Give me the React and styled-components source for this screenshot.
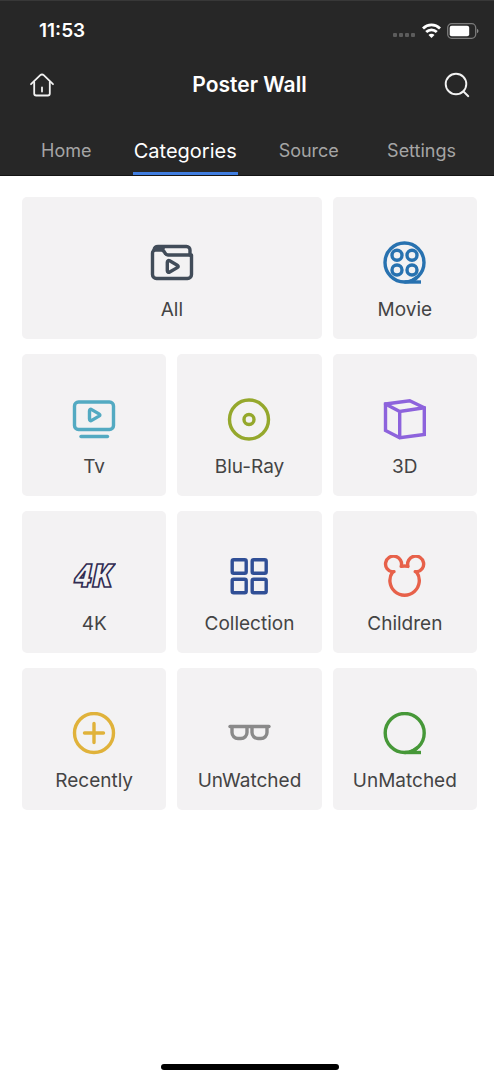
import React from "react";
import styled, { createGlobalStyle } from "styled-components";

const GlobalStyle = createGlobalStyle`
  * { box-sizing: border-box; }
  body {
    margin: 0;
    background: #ffffff;
    font-family: Inter, "Liberation Sans", sans-serif;
  }
  button { font: inherit; border: 0; padding: 0; cursor: pointer; }
`;

const Page = styled.div`
  display: flex;
  flex-direction: column;
  min-height: 100vh;
`;

const Header = styled.header`
  background: #272727;
  border-top: 1px solid #383838;
  border-bottom: 1px solid #141414;
`;

const StatusBar = styled.div`
  display: flex;
  align-items: center;
  justify-content: space-between;
  height: 59px;
  padding: 0 15px 0 39px;
`;

const Clock = styled.time`
  color: #ffffff;
  font-size: 19px;
  line-height: 24px;
  font-weight: 600;
`;

const StatusIcons = styled.div`
  display: flex;
  align-items: center;
  gap: 6px;
`;

const TitleBar = styled.div`
  display: grid;
  grid-template-columns: 1fr auto 1fr;
  align-items: center;
  height: 50px;
  padding: 0 24px 0 29px;
`;

const Title = styled.h1`
  margin: 0;
  color: #ffffff;
  font-size: 21px;
  line-height: 26px;
  font-weight: 600;
`;

const IconButton = styled.button`
  display: flex;
  justify-self: ${(p) => p.$side};
  background: none;
  color: #f2f2f2;
`;

const Tabs = styled.nav`
  display: grid;
  grid-template-columns: repeat(4, 1fr);
  justify-items: center;
  padding-top: 25px;
`;

const Tab = styled.button`
  height: 40px;
  padding: 0 1px 5px;
  background: none;
  border-bottom: 3px solid ${(p) => (p.$active ? "#3f7de0" : "transparent")};
  color: ${(p) => (p.$active ? "#ffffff" : "#a5a5a5")};
  font-size: ${(p) => (p.$active ? 20 : 18)}px;
  line-height: 24px;
  white-space: nowrap;

  &:first-child { justify-self: start; margin-left: 40px; }
  &:last-child { justify-self: end; margin-right: 37px; }
`;

const Grid = styled.main`
  display: grid;
  grid-template-columns: repeat(3, 1fr);
  gap: 15px 11px;
  padding: 21px 17px 24px 22px;
`;

const Tile = styled.button`
  grid-column: span ${(p) => (p.$wide ? 2 : 1)};
  display: flex;
  flex-direction: column;
  align-items: center;
  justify-content: flex-end;
  gap: 13px;
  height: 142px;
  && { padding-bottom: 17px; }
  border-radius: 5px;
  background: #f3f2f3;
  color: #444444;
`;

const TileLabel = styled.span`
  font-size: 19px;
  line-height: 24px;
`;

const Glyph = styled.svg`
  display: block;
  width: 44px;
  height: 44px;
  fill: none;
  stroke: ${(p) => p.$color};
  stroke-linecap: round;
  stroke-linejoin: round;
`;

const FourK = styled.text`
  font: italic 800 31px "Open Sans", "Liberation Sans", sans-serif;
  stroke-linejoin: miter;
`;

const HomeIndicator = styled.div`
  width: 178px;
  height: 6px;
  margin: auto auto 10px;
  border-radius: 3px;
  background: #000000;
`;

const Footer = styled.footer`
  display: flex;
  margin-top: auto;
  padding-left: 5px;
`;

const categories = [
  {
    label: "All",
    wide: true,
    color: "#414c59",
    art: (
      <>
        <path d="M2.500 12v21.500a4 4 0 0 0 4 4h31a4 4 0 0 0 4-4V14H18c-4 0-2.600-5-6.500-5H5.500a3 3 0 0 0-3 3z" />
        <path d="M4 9c.4-2.500 1.600-3.500 4-3.500h28.500a3.500 3.500 0 0 1 3.500 3.500v5" />
        <path d="M6 7.200h7" />
        <path d="M17.300 21.200c0-1.500 1.200-2.100 2.400-1.400l7.600 4.400c1.200.7 1.200 1.700 0 2.400l-7.600 4.400c-1.200.7-2.400.1-2.400-1.300z" />
      </>
    ),
  },
  {
    label: "Movie",
    color: "#2872b0",
    art: (
      <>
        <circle cx="21.500" cy="21.500" r="19.500" />
        <path d="M21.500 41H38" strokeLinecap="butt" />
        <path d="M28 40.200c2-.7 4-2 5.500-3.500" />
        <circle cx="14" cy="14.300" r="5" />
        <circle cx="29" cy="14.300" r="5" />
        <circle cx="14" cy="29" r="5" />
        <circle cx="29" cy="29" r="5" />
      </>
    ),
  },
  {
    label: "Tv",
    color: "#53aac2",
    art: (
      <>
        <rect x="2.500" y="4" width="39" height="27.500" rx="4" />
        <path d="M9 38.500h26.500" />
        <path d="M17.500 13c0-1.500 1-2.100 2.200-1.400l7.300 4.300c1.200.7 1.200 1.500 0 2.200l-7.300 4.300c-1.200.7-2.200.1-2.200-1.400z" />
      </>
    ),
  },
  {
    label: "Blu-Ray",
    color: "#95a82c",
    art: (
      <>
        <circle cx="22" cy="21.500" r="19.500" />
        <circle cx="22" cy="21.500" r="5" />
      </>
    ),
  },
  {
    label: "3D",
    color: "#8d63dc",
    art: (
      <g strokeLinejoin="miter">
        <path d="M2.500 6L26.700 2.800 41.300 9.800V36.500L16.700 39.700 2.500 32.500z" />
        <path d="M2.500 6l14.200 7.500L41.300 9.800M16.700 13.500v26" />
      </g>
    ),
  },
  {
    label: "4K",
    color: "#302c52",
    art: (
      <FourK x="21.500" y="32" textAnchor="middle" strokeWidth="1.600">
        4K
      </FourK>
    ),
  },
  {
    label: "Collection",
    color: "#304f96",
    art: (
      <>
        <rect x="5.200" y="4.800" width="14" height="13.500" rx="1.500" />
        <rect x="25.200" y="4.800" width="14" height="13.500" rx="1.500" />
        <rect x="5.200" y="24.200" width="14" height="13.500" rx="1.500" />
        <rect x="25.200" y="24.200" width="14" height="13.500" rx="1.500" />
      </>
    ),
  },
  {
    label: "Children",
    color: "#e7614a",
    art: (
      <>
        <path d="M18.200 11.400A14.700 14.700 0 0 1 25 11.400 8 8 0 1 1 33.600 17 14.700 14.700 0 1 1 9.600 17 8 8 0 1 1 18.200 11.400z" />
        <path d="M9.600 17l1.400-.3M33.600 17l-1.400-.3" />
      </>
    ),
  },
  {
    label: "Recently",
    color: "#e0b23a",
    art: (
      <>
        <circle cx="22" cy="21" r="19.500" />
        <path d="M12.500 21h19M22 11.500v19" />
      </>
    ),
  },
  {
    label: "UnWatched",
    color: "#8a8a8a",
    art: (
      <>
        <path d="M3 14.500h39" />
        <path d="M5 15v5.500a6 6 0 0 0 6 6h3a6 6 0 0 0 6-6V15M25 15v5.500a6 6 0 0 0 6 6h3a6 6 0 0 0 6-6V15" />
      </>
    ),
  },
  {
    label: "UnMatched",
    color: "#469838",
    art: (
      <>
        <circle cx="21.700" cy="21" r="19.500" />
        <path d="M21.700 40.500H38" strokeLinecap="butt" />
        <path d="M28 39.700c2-.7 4-2 5.500-3.500" />
      </>
    ),
  },
];

function StatusGlyphs() {
  return (
    <StatusIcons>
      <svg width="23" height="18" viewBox="0 0 23 18" fill="#5c5c5c" aria-hidden="true">
        <rect x="0" y="11" width="4" height="4" rx="1" />
        <rect x="6" y="11" width="4" height="4" rx="1" />
        <rect x="12" y="11" width="4" height="4" rx="1" />
        <rect x="18" y="11" width="4" height="4" rx="1" />
      </svg>
      <svg width="19" height="18" viewBox="0 0 19 18" fill="none" stroke="#ffffff" strokeWidth="2.800" aria-label="Wi-Fi">
        <path d="M1 6.400a12.200 12.200 0 0 1 17 0" />
        <path d="M4.200 10.100a7.600 7.600 0 0 1 10.600 0" />
        <path d="M9.500 16L6.500 12.900a4.200 4.200 0 0 1 6 0z" fill="#ffffff" stroke="none" />
      </svg>
      <svg width="32" height="18" viewBox="0 0 32 18" aria-label="Battery">
        <rect x="0.700" y="1.700" width="28" height="14.600" rx="4" fill="none" stroke="#7c7c7c" strokeWidth="1.300" />
        <rect x="2.700" y="3.700" width="19.500" height="10.600" rx="2" fill="#ffffff" />
        <path d="M30 6.800c2 .8 2 3.600 0 4.400z" fill="#8a8a8a" />
      </svg>
    </StatusIcons>
  );
}

export default function App() {
  const [active, setActive] = React.useState("Categories");
  return (
    <Page>
      <GlobalStyle />
      <Header>
        <StatusBar>
          <Clock>11:53</Clock>
          <StatusGlyphs />
        </StatusBar>
        <TitleBar>
          <IconButton $side="start" aria-label="Home page">
            <svg width="26" height="26" viewBox="0 0 26 26" fill="none" stroke="currentColor" strokeWidth="1.800" strokeLinecap="round" strokeLinejoin="round">
              <path d="M2 12.200L11.300 3.200a2.400 2.400 0 0 1 3.400 0L24 12.200" />
              <path d="M5.200 10v11.500a2 2 0 0 0 2 2h11.600a2 2 0 0 0 2-2V10" />
              <path d="M13 15.500v4" />
            </svg>
          </IconButton>
          <Title>Poster Wall</Title>
          <IconButton $side="end" aria-label="Search">
            <svg width="26" height="26" viewBox="0 0 26 26" fill="none" stroke="currentColor" strokeWidth="1.900" strokeLinecap="round">
              <circle cx="12" cy="12" r="10.300" />
              <path d="M19.500 19.500l4.800 4.700" />
            </svg>
          </IconButton>
        </TitleBar>
        <Tabs>
          {["Home", "Categories", "Source", "Settings"].map((name) => (
            <Tab key={name} $active={name === active} onClick={() => setActive(name)}>
              {name}
            </Tab>
          ))}
        </Tabs>
      </Header>
      <Grid>
        {categories.map((c) => (
          <Tile key={c.label} $wide={c.wide}>
            <Glyph $color={c.color} viewBox="0 0 44 44" strokeWidth="3.400" aria-hidden="true">
              {c.art}
            </Glyph>
            <TileLabel>{c.label}</TileLabel>
          </Tile>
        ))}
      </Grid>
      <Footer>
        <HomeIndicator />
      </Footer>
    </Page>
  );
}
